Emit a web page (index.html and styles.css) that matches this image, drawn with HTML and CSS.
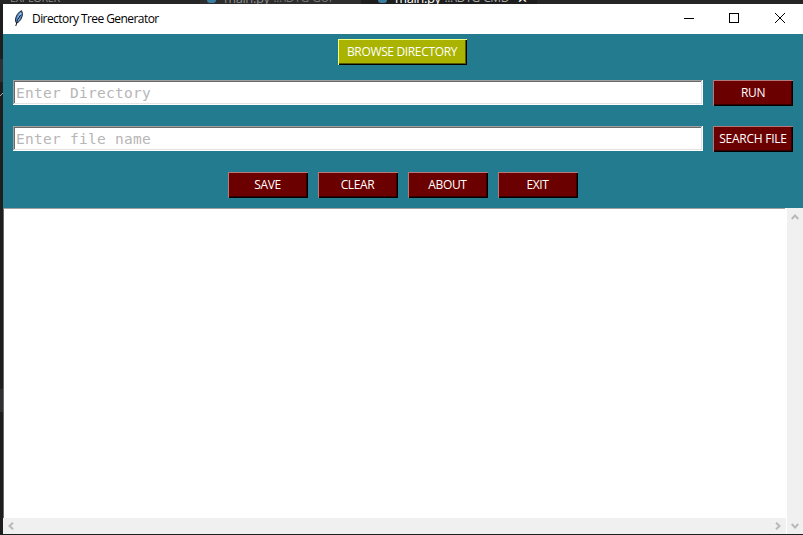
FILE: index.html
```html
<!DOCTYPE html>
<html lang="en">
<head>
<meta charset="utf-8">
<title>Directory Tree Generator</title>
<link rel="stylesheet" href="styles.css">
</head>
<body>
<div class="editor">
  <div class="rail"><i class="mark first"></i><svg class="stroke" width="3" height="5"><path d="M0 4L3 1" stroke="#aaa"/></svg><i class="mark second"></i></div>
  <div class="explorer"><span>EXPLORER</span></div>
  <div class="tab"><i class="py"></i><span>main.py</span><span class="path">...\DTG-GUI</span></div>
  <div class="tab active"><i class="py"></i><span>main.py</span><span class="path">...\DTG-CMD</span><span class="x">✕</span></div>
</div>
<main class="window">
  <header class="titlebar">
    <svg class="feather" width="10" height="17" viewBox="0 0 10 17">
      <path d="M7.500 .7C4.500 2 1.600 6 1.500 10l.5 2.500 1 .5c3-1.500 5.300-5 5.500-9.500z" fill="#5c93d3" stroke="#17202c"/>
      <path d="M7 3L4 8M5 8l-2 4" stroke="#b9d8f4" fill="none"/>
      <path d="M6.500 5L3.500 10 1.800 16" stroke="#101828" fill="none"/>
    </svg>
    <h1>Directory Tree Generator</h1>
    <svg class="controls" width="143" height="30" viewBox="0 0 143 30" fill="none" stroke="#000" shape-rendering="crispEdges">
      <path d="M24 14.500h10M69.500 9.500h9v9h-9z"/>
      <path d="M115 9l10 10M125 9l-10 10" shape-rendering="auto"/>
    </svg>
  </header>
  <section class="panel">
    <button class="btn browse">BROWSE DIRECTORY</button>
    <div class="row"><input class="entry" placeholder="Enter Directory"><button class="btn run">RUN</button></div>
    <div class="row"><input class="entry" placeholder="Enter file name"><button class="btn search">SEARCH FILE</button></div>
    <div class="actions">
      <button class="btn">SAVE</button><button class="btn">CLEAR</button><button class="btn">ABOUT</button><button class="btn">EXIT</button>
    </div>
  </section>
  <section class="output">
    <div class="text"></div>
    <div class="bar vertical">
      <svg width="8" height="6" viewBox="0 0 8 6"><path d="M.7 5L4 1.500 7.300 5"/></svg>
      <svg width="8" height="6" viewBox="0 0 8 6"><path d="M.7 1L4 4.500 7.300 1"/></svg>
    </div>
    <div class="bar horizontal">
      <svg width="6" height="8" viewBox="0 0 6 8"><path d="M5 .7L1.500 4 5 7.300"/></svg>
      <svg width="6" height="8" viewBox="0 0 6 8"><path d="M1 .7L4.500 4 1 7.300"/></svg>
    </div>
  </section>
</main>
</body>
</html>
```
FILE: styles.css
```css
* { box-sizing: border-box; }
body {
  margin: 0;
  width: 803px;
  height: 535px;
  overflow: hidden;
  background: #1e1e1e;
  font-family: "Open Sans", "Noto Sans", sans-serif;
  font-size: 12px;
}
.editor {
  height: 4px;
  display: flex;
  overflow: hidden;
  background: #252526;
  color: #8b8b8b;
  line-height: 14px;
}
.editor span { margin-top: -9px; height: 14px; white-space: nowrap; }
.explorer { width: 200px; padding-left: 10px; font-size: 11px; display: flex; letter-spacing: -.4px; }
.tab {
  width: 161px;
  display: flex;
  padding-left: 7px;
  background: #2d2d2d;
  color: #8b8b8b;
  font-size: 13px;
  letter-spacing: -.4px;
}
.tab.active { width: 176px; padding-left: 17px; background: #1e1e1e; color: #fff; }
.py { width: 9px; height: 3px; margin-right: 8px; border-radius: 0 0 4px 4px; background: #3b7d9e; }
.path { margin-left: 4px; font-size: 12px; color: #777; }
.active .path { color: #aaa; }
.x { margin-left: 8px; }
.rail { position: absolute; left: 0; top: 4px; width: 3px; height: 531px; background: #1e1e1e; overflow: hidden; }
.mark { position: absolute; left: 0; width: 3px; height: 23px; background: #303034; }
.first { top: 55px; }
.second { top: 385px; }
.stroke { position: absolute; left: 0; top: 88px; }
.window { margin-left: 3px; width: 800px; height: 530px; background: #fff; }
.titlebar { height: 30px; display: flex; align-items: center; background: #fff; }
.feather { margin: 0 0 2px 11px; flex: none; }
.titlebar h1 {
  margin: 0 0 0 8px;
  flex: 1;
  font-size: 12px;
  font-weight: 400;
  line-height: 30px;
  letter-spacing: -.57px;
  white-space: nowrap;
}
.controls { flex: none; }
.panel {
  height: 174px;
  padding: 5px 10px 0;
  background: #237b8f;
  display: flex;
  flex-direction: column;
}
.btn {
  width: 80px;
  height: 26px;
  flex: none;
  padding: 0 1px 1px 0;
  border: 0;
  background: #6b0000;
  box-shadow: inset 1px 1px #b57979, inset -1px -1px #000, inset -2px -2px #350000;
  color: #fff;
  font: 12px/24px "Open Sans", "Noto Sans", sans-serif;
  letter-spacing: -.35px;
  white-space: nowrap;
}
.run { padding-right: 0; }
.search { padding-right: 0; letter-spacing: -.25px; }
.browse {
  width: 129px;
  margin-left: 325px;
  margin-bottom: 15px;
  background: #a9b300;
  box-shadow: inset 1px 1px #f2ff82, inset -1px -1px #000, inset -2px -2px #555a00;
}
.row { display: flex; gap: 10px; height: 26px; margin-bottom: 20px; }
.entry {
  width: 690px;
  height: 25px;
  margin: 0;
  padding: 1px 3px 1px;
  border: 0;
  outline: 0;
  border-radius: 0;
  background: #fff;
  box-shadow: inset -1px -1px #fff, inset 1px 1px #a0a0a0, inset -2px -2px #e3e3e3, inset 2px 2px #696969;
  font: 14.5px/21px "DejaVu Sans Mono", monospace;
  letter-spacing: .27px;
}
.entry::placeholder { color: #b6b6b6; opacity: 1; }
.actions { display: flex; gap: 10px; justify-content: center; }
.output { height: 326px; display: grid; grid-template-columns: 784px 16px; grid-template-rows: 310px 16px; }
.text { width: 782px; border-top: 1px solid #a0a0a0; border-left: 1px solid #696969; }
.bar { display: flex; justify-content: space-between; align-items: center; background: #f0f0f0; }
.bar path { fill: none; stroke: #b9b9b9; stroke-width: 2; }
.vertical { grid-column: 2; grid-row: 1 / 3; flex-direction: column; padding: 6px 0 5px; }
.horizontal { grid-column: 1; grid-row: 2; width: 783px; padding: 0 5px; }
```
